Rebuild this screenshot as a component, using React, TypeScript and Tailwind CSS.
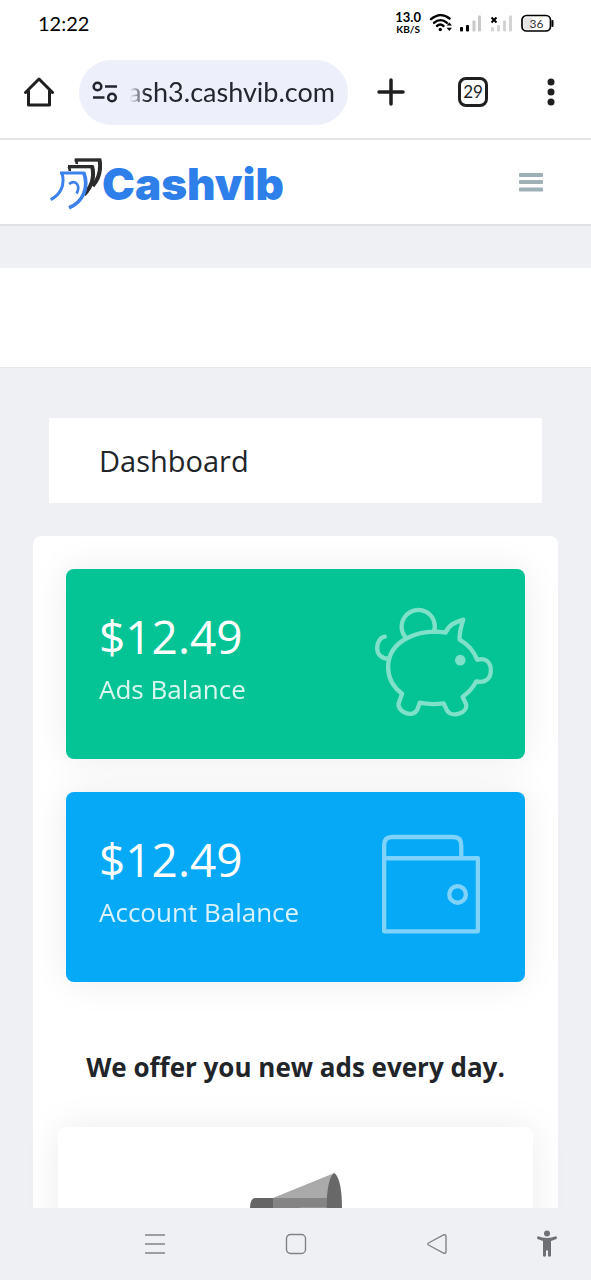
import React from 'react';

const HomeIcon: React.FC = () => (
  <svg viewBox="0 0 32 32" className="w-8 h-8" fill="none" stroke="#1f1f1f" strokeWidth="3" strokeLinecap="round" strokeLinejoin="round">
    <path d="M2.500 16.500 16 3l13.500 13.500M5.500 15v14h21V15" />
  </svg>
);

const SiteSettingsIcon: React.FC = () => (
  <svg viewBox="0 0 26 22" className="w-[26px] h-[22px] shrink-0" fill="none" stroke="#24262e" strokeWidth="2.600">
    <circle cx="5.500" cy="5.500" r="3.800" />
    <path d="M13 5.500h12M1 16.500h11.500" />
    <circle cx="20" cy="16.500" r="3.800" />
  </svg>
);

const StatusIcons: React.FC = () => (
  <svg viewBox="0 0 126 20" className="w-[126px] h-5" fill="none">
    {/* wifi */}
    <g stroke="#000" strokeWidth="2.400" strokeLinecap="round">
      <path d="M2 6.200C8 1 15 1 20.500 5.500" />
      <path d="M5 9.800c4-3.500 9-3.500 13 0" />
      <path d="M8 13c2-1.800 4.500-1.800 6.500 0" />
    </g>
    <circle cx="11.300" cy="16.500" r="1.700" fill="#000" />
    <path d="m20.300 9.500 2.700 3h-5.400zM20.300 18l2.700-3.200h-5.400z" fill="#000" />
    {/* first sim */}
    <rect x="31" y="14" width="3" height="4.500" rx="1" fill="#000" />
    <rect x="37" y="12" width="3" height="6.500" rx="1" fill="#000" />
    <rect x="43.500" y="7.500" width="3" height="11" rx="1" fill="#c9c9c9" />
    <rect x="49" y="2.500" width="3" height="16" rx="1" fill="#c9c9c9" />
    {/* second sim */}
    <path d="m62.500 4.500 5 5m0-5-5 5" stroke="#000" strokeWidth="2" />
    <rect x="62" y="14" width="3" height="4.500" rx="1" fill="#d4d4d4" />
    <rect x="68" y="12" width="3" height="6.500" rx="1" fill="#d4d4d4" />
    <rect x="74" y="7.500" width="3" height="11" rx="1" fill="#d4d4d4" />
    <rect x="80" y="2.500" width="3" height="16" rx="1" fill="#d4d4d4" />
    {/* battery */}
    <rect x="93" y="2.500" width="28.500" height="15.500" rx="4.500" fill="#fff" stroke="#000" strokeWidth="1.700" />
    <path d="M97.500 4.500h6v12h-6a3 3 0 0 1-3-3v-6a3 3 0 0 1 3-3z" fill="#e3e3e3" />
    <path d="M123.500 8v5" stroke="#000" strokeWidth="2" strokeLinecap="round" />
    <text x="107.500" y="14.500" textAnchor="middle" fontSize="12" fill="#333" className="font-['Lato',sans-serif]">36</text>
  </svg>
);

const LogoMark: React.FC = () => (
  <svg viewBox="0 0 162 162" className="w-[54px] h-[54px]" fill="none">
    <g stroke="#2b2b2b">
      <path d="M80 9h76" strokeWidth="10" />
      <path d="M83 9q4 6 3 12" strokeWidth="8" />
      <path d="M154 5c7 35-2 61-20 82" strokeWidth="12" />
      <path d="M60 29h75" strokeWidth="10" />
      <path d="M62 29q4 7 3 13" strokeWidth="8" />
      <path d="M132 26c8 31-1 63-24 87" strokeWidth="12" />
    </g>
    <g stroke="#3c82ea">
      <path d="M36 48h74" strokeWidth="9" />
      <path d="M42 48c10 36-4 65-34 80" strokeWidth="9" />
      <path d="M107 46c17 45-2 90-44 106" strokeWidth="11" />
      <path d="M63 81c18-14 36 1 23 29" strokeWidth="8" />
    </g>
  </svg>
);

const PiggyIcon: React.FC = () => (
  <svg viewBox="39 48 360 340" className="w-[120px] h-[113px]" fill="none" stroke="#7fe1c9" strokeWidth="13" strokeLinejoin="round" strokeLinecap="round">
    <path d="M138 147A50 50 0 1 1 222 129" />
    <path d="M74 143C48 145 34 208 87 210" />
    <path d="M257 131C180 118 84 153 84 235c0 35 17 61 42 80l-10 28c-8 24 44 50 57 17l6-18c24 5 48 5 72 2l9 19c15 28 67 9 58-18l-10-21c19-13 31-27 41-46 27 6 44-8 44-34 0-25-18-39-41-31-10-26-28-47-53-61-1-19 4-38 11-60-30 10-44 17-53 39z" />
    <circle cx="301" cy="214" r="16" fill="#7fe1c9" stroke="none" />
  </svg>
);

const WalletIcon: React.FC = () => (
  <svg viewBox="39 27 360 340" className="w-[120px] h-[113px]" fill="none" stroke="#7fd3fb" strokeWidth="13" strokeLinejoin="round">
    <path d="M72 118h282v220H72z" />
    <path d="M72 118V78q0-24 24-24h184q24 0 24 24v40" />
    <circle cx="293" cy="227" r="25" />
  </svg>
);

const MegaphoneIcon: React.FC = () => (
  <svg viewBox="0 0 84 36" className="w-[92px] h-9" preserveAspectRatio="none">
    <path d="M0 36q0-10 4-11h19v11z" fill="#656565" />
    <path d="M21 25h55v11H21z" fill="#848484" />
    <path d="M21 25 77 0l-4 25z" fill="#aaa" />
    <path d="M46 34.500h26V36H46z" fill="#aaa" />
    <path d="M70 36Q70 5 77 0q7 6 7 36z" fill="#686868" />
  </svg>
);

interface BalanceCardProps {
  amount: string;
  label: string;
  color: string;
  icon: React.ReactNode;
}

const BalanceCard: React.FC<BalanceCardProps> = ({ amount, label, color, icon }) => (
  <div className={`flex h-[190px] items-start justify-between rounded-lg pl-[33px] pr-8 pt-9 text-white shadow-[0_0_36px_rgba(0,0,0,0.08)] ${color}`}>
    <div>
      <p className="text-[46px] leading-[62px]">{amount}</p>
      <p className="text-[26px] leading-[44px] opacity-85">{label}</p>
    </div>
    {icon}
  </div>
);

const App: React.FC = () => {
  return (
    <div className="flex h-screen flex-col overflow-hidden bg-[#eef0f4] font-['Open_Sans',sans-serif] text-[#212529]">
      {/* Phone status bar */}
      <div className="flex h-[46px] shrink-0 items-center justify-between bg-white pl-[38px] pr-9 font-['Lato',sans-serif] text-black">
        <span className="text-[20px]">12:22</span>
        <div className="flex items-center gap-2">
          <div className="text-center font-bold">
            <div className="text-[13px] leading-3">13.0</div>
            <div className="text-[10px] leading-3">KB/S</div>
          </div>
          <StatusIcons />
        </div>
      </div>

      {/* Browser toolbar */}
      <div className="flex h-[94px] shrink-0 items-center border-b-2 border-[#e4e4e6] bg-white pl-[23px] pr-[25px] font-['Lato',sans-serif]">
        <button aria-label="Home">
          <HomeIcon />
        </button>
        <div className="ml-6 flex h-[65px] min-w-0 flex-1 items-center gap-3 rounded-full bg-[#edeffa] px-[13px]">
          <SiteSettingsIcon />
          <input
            aria-label="Address"
            dir="rtl"
            readOnly
            value="ash3.cashvib.com"
            className="w-full min-w-0 bg-transparent text-[27px] text-[#24262e] outline-none [mask-image:linear-gradient(to_right,transparent,black_16px)]"
          />
        </div>
        <button aria-label="New tab" className="ml-7">
          <svg viewBox="0 0 30 30" className="h-[30px] w-[30px]" stroke="#1f1f1f" strokeWidth="3.500" strokeLinecap="round">
            <path d="M15 3v24M3 15h24" />
          </svg>
        </button>
        <button aria-label="Tabs" className="ml-[52px] flex h-[30px] w-[30px] items-center justify-center rounded-lg border-3 border-[#1f1f1f] text-[17px] leading-6 text-[#1f1f1f]">
          29
        </button>
        <button aria-label="More" className="ml-12">
          <svg viewBox="0 0 30 30" className="h-[30px] w-[30px]" fill="#1f1f1f">
            <circle cx="15" cy="5" r="3.500" />
            <circle cx="15" cy="15" r="3.500" />
            <circle cx="15" cy="25" r="3.500" />
          </svg>
        </button>
      </div>

      {/* Site header */}
      <header className="flex h-[86px] shrink-0 items-center justify-between border-b-2 border-[#dfe2e5] bg-white px-12">
        <a href="#" className="flex items-center pt-1">
          <LogoMark />
          <span className="font-['Inter',sans-serif] text-[44px] font-black leading-[54px] text-[#2f7fea]">Cashvib</span>
        </a>
        <button aria-label="Menu">
          <svg viewBox="0 0 24 20" className="h-5 w-6" fill="#9db0b6">
            <rect y="1" width="24" height="4" rx="1" />
            <rect y="8" width="24" height="4" rx="1" />
            <rect y="15.500" width="24" height="4" rx="1" />
          </svg>
        </button>
      </header>

      <main className="min-h-0 flex-1 overflow-hidden pt-[42px]">
        <div className="h-[100px] border-b border-[#e6e8eb] bg-white" />

        <div className="px-[33px]">
          <div className="mx-4 mt-[50px] bg-white px-[50px] py-[22px]">
            <h1 className="text-[29px] leading-[41px]">Dashboard</h1>
          </div>

          <div className="mt-[33px] rounded-lg bg-white px-[33px] pt-[33px]">
            <div className="flex flex-col gap-[33px]">
              <BalanceCard amount="$12.49" label="Ads Balance" color="bg-[#04c495]" icon={<PiggyIcon />} />
              <BalanceCard amount="$12.49" label="Account Balance" color="bg-[#05a9f5]" icon={<WalletIcon />} />
            </div>

            <h2 className="mt-[65px] text-center text-[26px] font-bold leading-10">We offer you new ads every day.</h2>

            <div className="-mx-2 mt-10 flex h-60 items-start justify-center rounded-lg bg-white pt-[46px] shadow-[0_0_36px_rgba(0,0,0,0.08)]">
              <MegaphoneIcon />
            </div>
          </div>
        </div>
      </main>

      {/* System navigation */}
      <nav className="relative flex h-[72px] shrink-0 items-center bg-[#eef0f4] px-[84px]">
        <button aria-label="Recent apps" className="flex flex-1 justify-center">
          <svg viewBox="0 0 22 22" className="h-[22px] w-[22px]" stroke="#828387" strokeWidth="1.500">
            <path d="M1 2h20M1 11h20M1 20h20" />
          </svg>
        </button>
        <button aria-label="Home screen" className="flex flex-1 justify-center">
          <svg viewBox="0 0 22 22" className="h-[22px] w-[22px]" fill="none" stroke="#828387" strokeWidth="1.400">
            <rect x="1.500" y="1.500" width="19" height="19" rx="4" />
          </svg>
        </button>
        <button aria-label="Back" className="flex flex-1 justify-center">
          <svg viewBox="0 0 22 22" className="h-[22px] w-[22px]" fill="none" stroke="#828387" strokeWidth="1.400">
            <path d="M2.500 10 17.500 2Q20 1 20 3.500v15Q20 21 17.500 20L2.500 12Q1 11 2.500 10z" />
          </svg>
        </button>
        <button aria-label="Accessibility" className="absolute right-[34px] top-[22px]">
          <svg viewBox="0 0 20 28" className="h-7 w-5" fill="#6f7075">
            <circle cx="10" cy="3.500" r="3" />
            <path d="M1 6.200q9 3.600 18 0 1.500.8.500 2.800l-5.500 2V26q-1.500 1.500-3 0v-5.500H9V26q-1.500 1.500-3 0V11L.5 9Q-.5 7 1 6.200z" />
          </svg>
        </button>
      </nav>
    </div>
  );
};

export default App;
